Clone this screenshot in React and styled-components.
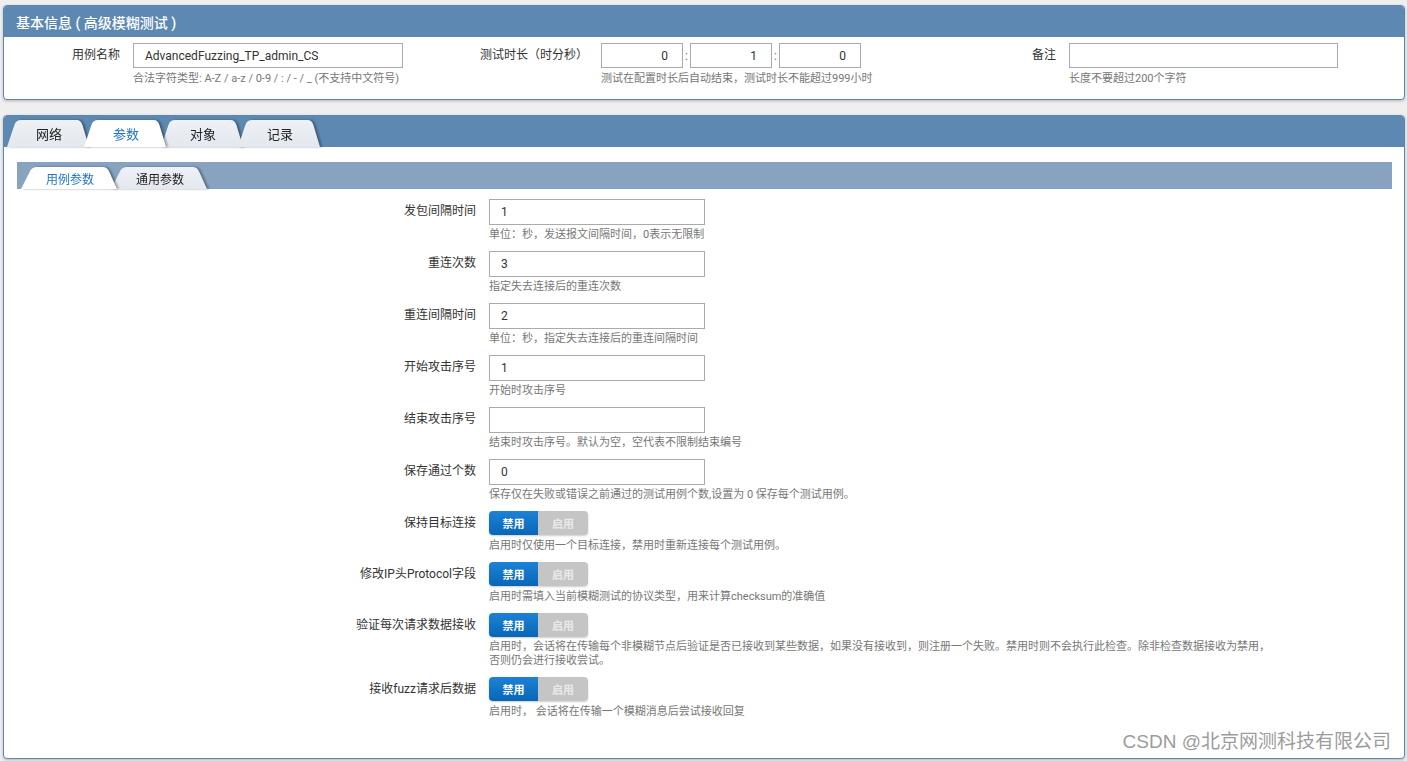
import React from "react";
import styled, { createGlobalStyle } from "styled-components";

const GlobalStyle = createGlobalStyle`
  html, body {
    margin: 0;
    padding: 0;
    background: #efefef;
  }
  body {
    font-family: Roboto, "Noto Sans CJK SC", sans-serif;
    font-size: 12px;
    color: #333;
  }
  * { box-sizing: border-box; }
`;

const Page = styled.div`
  padding: 5px 2px 2px 3px;
  display: flex;
  flex-direction: column;
  gap: 15px;
`;

const Panel = styled.div`
  position: relative;
  background: #fff;
  border: 1px solid #5b87b0;
  border-radius: 4px;
  box-shadow: 0 1px 3px rgba(0, 0, 0, 0.25);
  overflow: hidden;
`;

const PanelHead = styled.div`
  height: 31px;
  background: #5d88b1;
  color: #fff;
  font-size: 14px;
  font-weight: 500;
  display: flex;
  align-items: ${(p) => (p.$tabs ? "flex-end" : "center")};
  padding-left: ${(p) => (p.$tabs ? "3px" : "12px")};
`;

const InfoGrid = styled.div`
  display: grid;
  grid-template-columns: repeat(3, 468px);
  padding: 6px 0 13px;
`;

const Field = styled.div`
  display: grid;
  grid-template-columns: 116px auto;
  column-gap: 13px;
  align-items: start;
`;

const FieldLabel = styled.div`
  text-align: right;
  line-height: 25px;
  white-space: nowrap;
`;

const TextBox = styled.div`
  width: ${(p) => p.$w}px;
  height: ${(p) => p.$h || 25}px;
  border: 1px solid #aaa;
  background: #fff;
  display: flex;
  align-items: center;
  justify-content: ${(p) => (p.$right ? "flex-end" : "flex-start")};
  padding: ${(p) => (p.$right ? "0 14px 0 0" : "0 0 0 11px")};
  font-size: 12px;
  color: #333;
`;

const Help = styled.div`
  margin-top: ${(p) => p.$mt || 3}px;
`;

const HelpLine = styled.div`
  height: ${(p) => (p.$tight ? 14 : 15)}px;
  font-size: 11px;
  color: #777;
  line-height: ${(p) => (p.$tight ? 14 : 15)}px;
  white-space: nowrap;
`;

const TimeRow = styled.div`
  display: flex;
  align-items: center;
`;

const Colon = styled.span`
  width: 7px;
  text-align: center;
  color: #777;
`;

const TabBar = styled.div`
  display: flex;
  padding-left: ${(p) => p.$pad || 0}px;
`;

const tabPath = (w, h) =>
  `path('M0 ${h} L${w * 0.09} 5 Q${w * 0.11} 0 ${w * 0.17} 0 L${w * 0.85} 0 Q${
    w * 0.9
  } 0 ${w * 0.92} 5 L${w} ${h} Z')`;

const Tab = styled.div`
  position: relative;
  width: ${(p) => p.$w}px;
  height: ${(p) => p.$h}px;
  margin-left: ${(p) => (p.$first ? 0 : -p.$overlap)}px;
  display: flex;
  align-items: center;
  justify-content: center;
  padding-left: 2px;
  font-size: ${(p) => p.$fs}px;
  font-weight: 400;
  color: ${(p) => (p.$active ? "#1f74c6" : "#222")};
  z-index: ${(p) => (p.$active ? 3 : 1)};
  filter: drop-shadow(2px 0 1px rgba(0, 0, 0, 0.35));
  &::before {
    content: "";
    position: absolute;
    inset: 0;
    z-index: -1;
    clip-path: ${(p) => tabPath(p.$w, p.$h)};
    background: ${(p) =>
      p.$active ? "#fff" : "linear-gradient(#eef1f5, #e3e8ef)"};
  }
`;

const PanelBody = styled.div`
  padding: 15px 12px 39px 13px;
`;

const SubBand = styled.div`
  height: 27px;
  background: #87a3c0;
  display: flex;
  align-items: flex-end;
`;

const Form = styled.div`
  display: flex;
  flex-direction: column;
  gap: 9px;
  padding-top: 10px;
`;

const Row = styled.div`
  display: grid;
  grid-template-columns: 459px 1fr;
  column-gap: 13px;
`;

const RowLabel = styled.div`
  text-align: right;
  height: ${(p) => (p.$switch ? 24 : 26)}px;
  line-height: ${(p) => (p.$switch ? 24 : 25)}px;
  white-space: nowrap;
`;

const Switch = styled.div`
  display: flex;
  width: 99px;
  height: 24px;
  border-radius: 4px;
  overflow: hidden;
  box-shadow: 0 1px 2px rgba(0, 0, 0, 0.2);
`;

const SwitchOpt = styled.span`
  width: ${(p) => (p.$on ? 49 : 50)}px;
  display: flex;
  align-items: center;
  justify-content: center;
  font-size: 11px;
  font-weight: bold;
  color: ${(p) => (p.$on ? "#fff" : "#e9e9e9")};
  background: ${(p) =>
    p.$on ? "linear-gradient(#1c82d6, #0966b7)" : "#c5c5c5"};
`;

const Watermark = styled.div`
  position: absolute;
  right: 13px;
  bottom: 5px;
  font-size: 19px;
  color: #9c9c9c;
  text-shadow: 0 0 2px #fff;
  font-family: "Liberation Sans", "Noto Sans CJK SC", sans-serif;
`;

const mainTabs = ["网络", "参数", "对象", "记录"];
const subTabs = ["用例参数", "通用参数"];

const rows = [
  { label: "发包间隔时间", value: "1", help: ["单位：秒，发送报文间隔时间，0表示无限制"] },
  { label: "重连次数", value: "3", help: ["指定失去连接后的重连次数"] },
  { label: "重连间隔时间", value: "2", help: ["单位：秒，指定失去连接后的重连间隔时间"] },
  { label: "开始攻击序号", value: "1", help: ["开始时攻击序号"] },
  { label: "结束攻击序号", value: "", help: ["结束时攻击序号。默认为空，空代表不限制结束编号"] },
  { label: "保存通过个数", value: "0", help: ["保存仅在失败或错误之前通过的测试用例个数,设置为 0 保存每个测试用例。"] },
  { label: "保持目标连接", toggle: true, help: ["启用时仅使用一个目标连接，禁用时重新连接每个测试用例。"] },
  { label: "修改IP头Protocol字段", toggle: true, help: ["启用时需填入当前模糊测试的协议类型，用来计算checksum的准确值"] },
  {
    label: "验证每次请求数据接收",
    toggle: true,
    help: [
      "启用时，会话将在传输每个非模糊节点后验证是否已接收到某些数据，如果没有接收到，则注册一个失败。禁用时则不会执行此检查。除非检查数据接收为禁用，",
      "否则仍会进行接收尝试。",
    ],
  },
  { label: "接收fuzz请求后数据", toggle: true, help: ["启用时， 会话将在传输一个模糊消息后尝试接收回复"] },
];

const App = () => {
  return (
    <Page>
      <GlobalStyle />
      <Panel>
        <PanelHead>基本信息 ( 高级模糊测试 )</PanelHead>
        <InfoGrid>
          <Field>
            <FieldLabel>用例名称</FieldLabel>
            <div>
              <TextBox $w={270}>AdvancedFuzzing_TP_admin_CS</TextBox>
              <Help>
                <HelpLine>合法字符类型: A-Z / a-z / 0-9 / : / - / _ (不支持中文符号)</HelpLine>
              </Help>
            </div>
          </Field>
          <Field>
            <FieldLabel>测试时长（时分秒）</FieldLabel>
            <div>
              <TimeRow>
                <TextBox $w={82} $right>0</TextBox>
                <Colon>:</Colon>
                <TextBox $w={82} $right>1</TextBox>
                <Colon>:</Colon>
                <TextBox $w={82} $right>0</TextBox>
              </TimeRow>
              <Help>
                <HelpLine>测试在配置时长后自动结束，测试时长不能超过999小时</HelpLine>
              </Help>
            </div>
          </Field>
          <Field>
            <FieldLabel>备注</FieldLabel>
            <div>
              <TextBox $w={269}></TextBox>
              <Help>
                <HelpLine>长度不要超过200个字符</HelpLine>
              </Help>
            </div>
          </Field>
        </InfoGrid>
      </Panel>

      <Panel>
        <PanelHead $tabs>
          <TabBar>
            {mainTabs.map((t, i) => (
              <Tab key={t} $w={82} $h={27} $fs={13} $overlap={5} $first={i === 0} $active={i === 1}>
                {t}
              </Tab>
            ))}
          </TabBar>
        </PanelHead>
        <PanelBody>
          <SubBand>
            <TabBar $pad={4}>
              {subTabs.map((t, i) => (
                <Tab key={t} $w={96} $h={22} $fs={12} $overlap={6} $first={i === 0} $active={i === 0}>
                  {t}
                </Tab>
              ))}
            </TabBar>
          </SubBand>
          <Form>
            {rows.map((r) => (
              <Row key={r.label}>
                <RowLabel $switch={r.toggle}>{r.label}</RowLabel>
                <div>
                  {r.toggle ? (
                    <Switch>
                      <SwitchOpt $on>禁用</SwitchOpt>
                      <SwitchOpt>启用</SwitchOpt>
                    </Switch>
                  ) : (
                    <TextBox $w={216} $h={26}>
                      {r.value}
                    </TextBox>
                  )}
                  <Help $mt={r.toggle ? 3 : 2}>
                    {r.help.map((line) => (
                      <HelpLine key={line} $tight={r.help.length > 1}>
                        {line}
                      </HelpLine>
                    ))}
                  </Help>
                </div>
              </Row>
            ))}
          </Form>
        </PanelBody>
        <Watermark>CSDN @北京网测科技有限公司</Watermark>
      </Panel>
    </Page>
  );
};

export default App;
